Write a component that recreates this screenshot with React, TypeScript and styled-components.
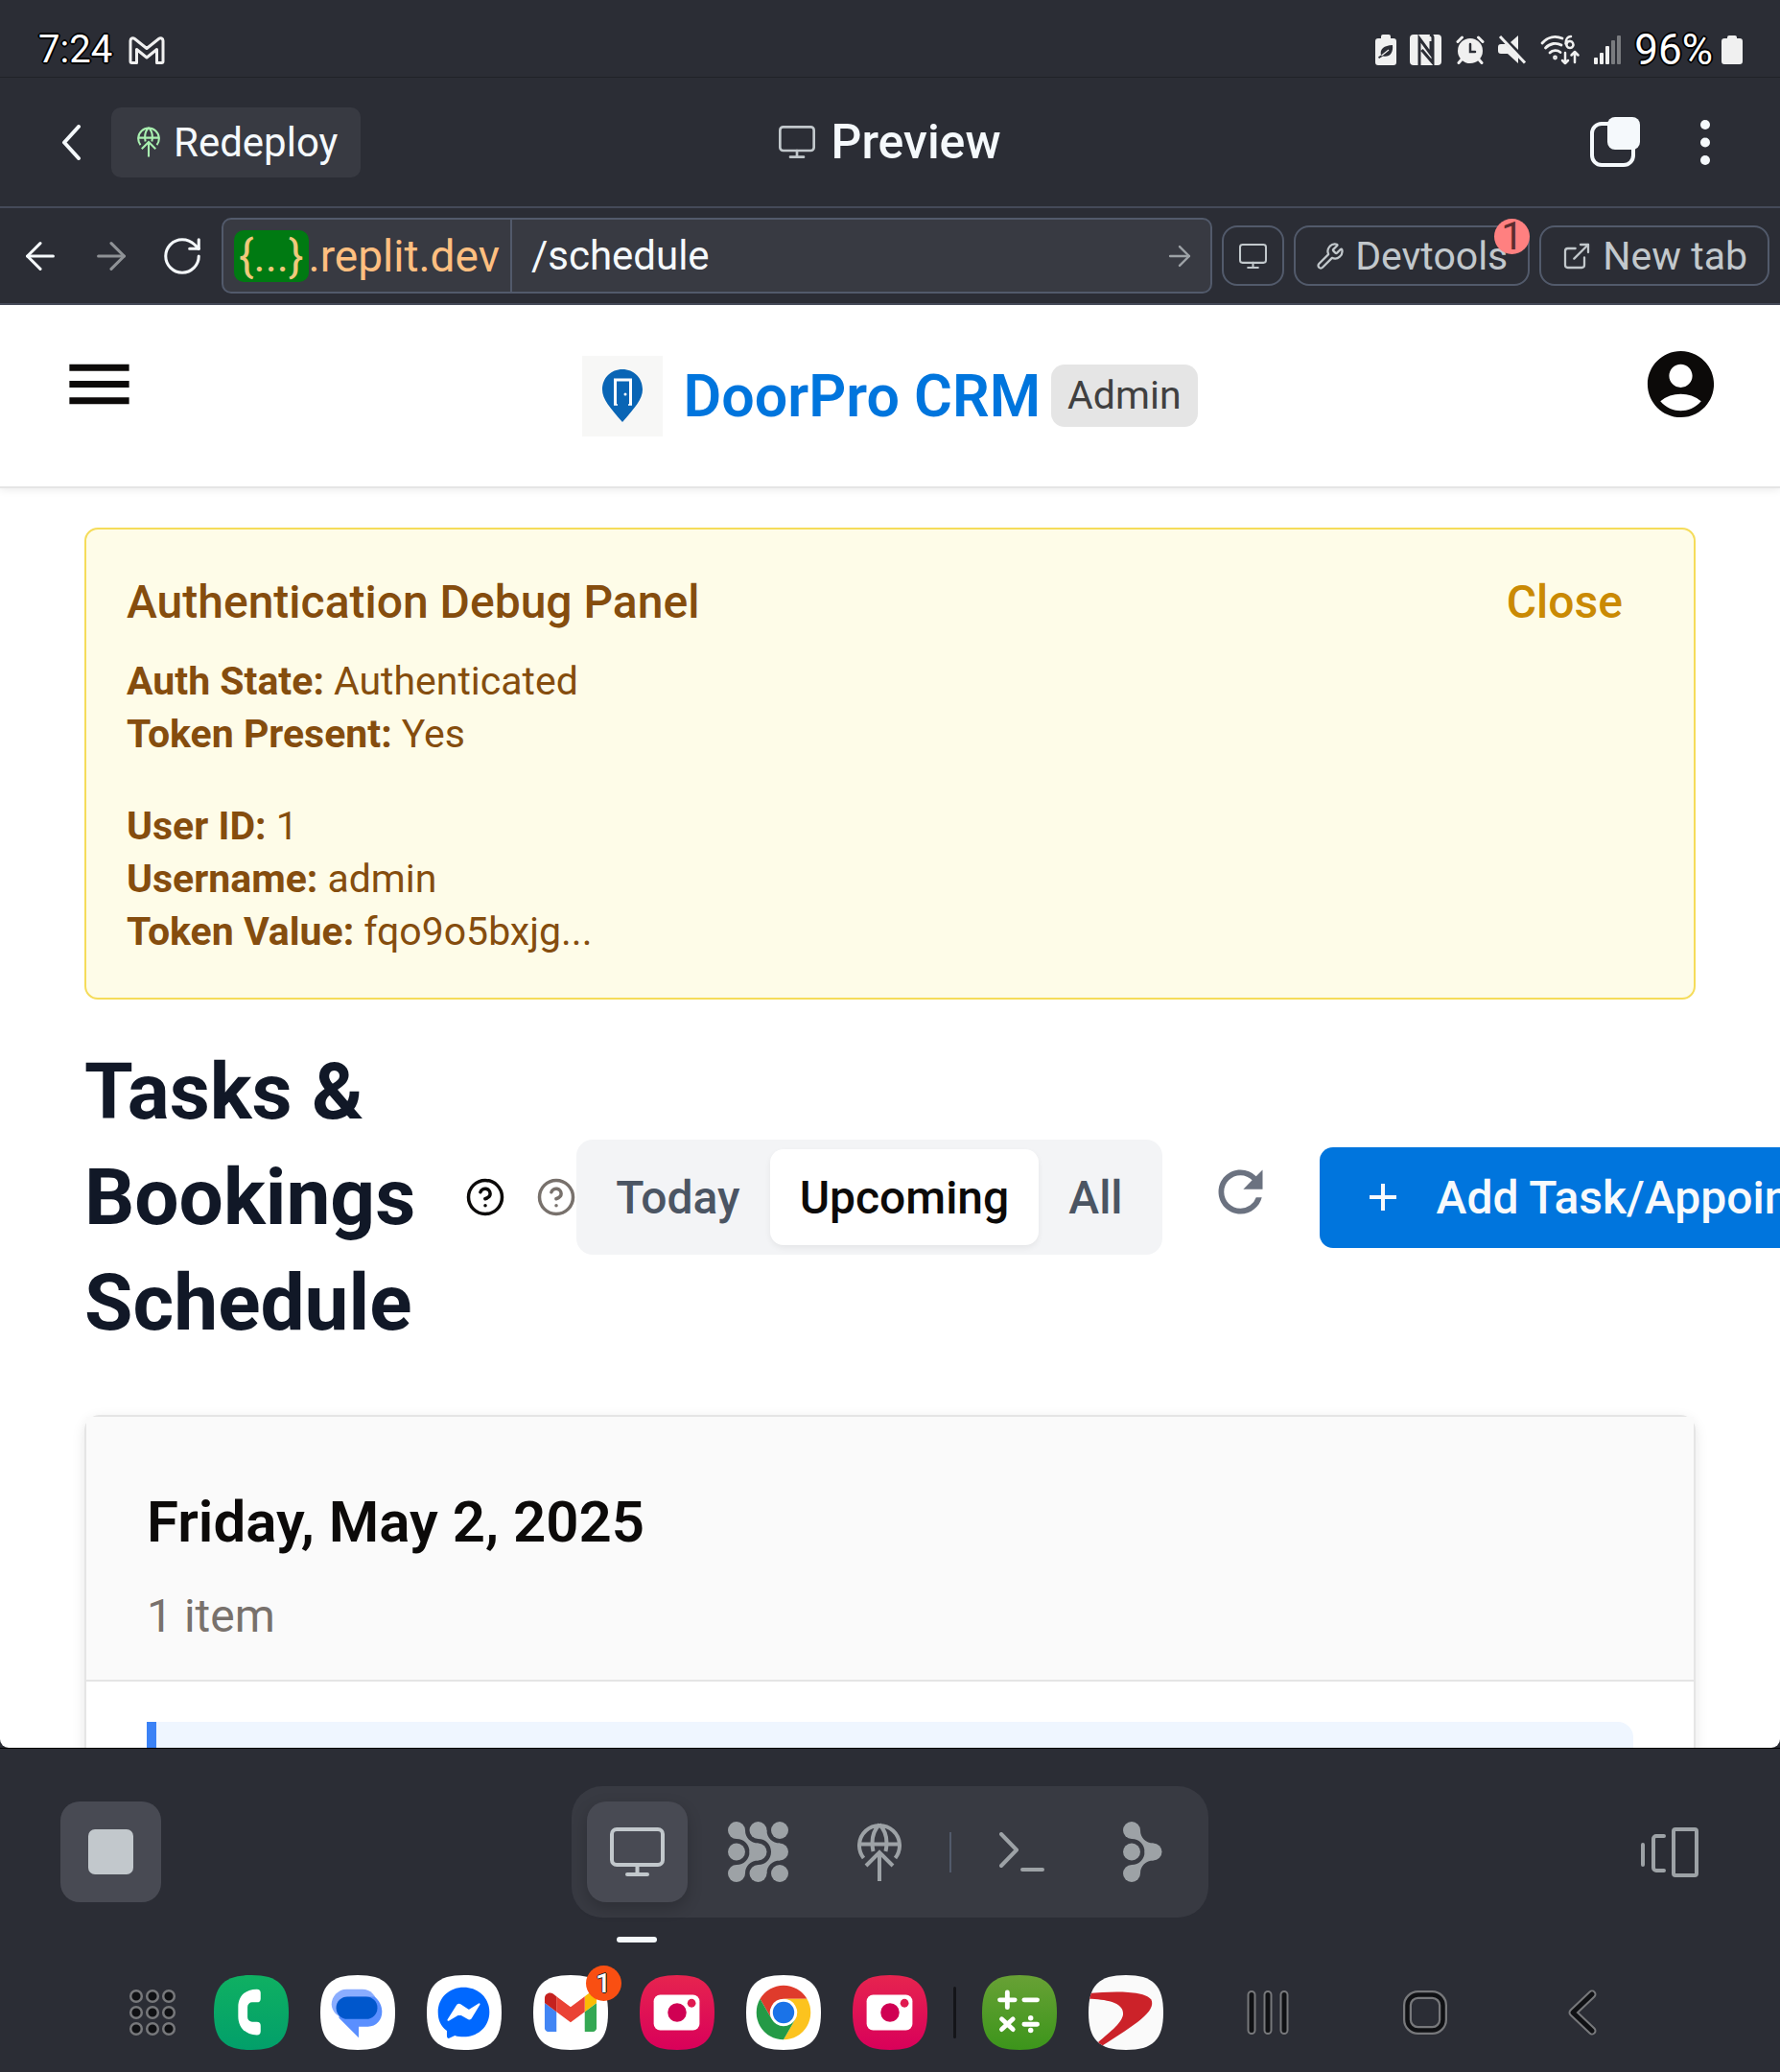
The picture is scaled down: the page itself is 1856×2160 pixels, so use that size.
import React from "react";
import styled, { createGlobalStyle, css } from "styled-components";
import { ArrowLeft, ArrowRight, CircleHelp, ExternalLink, RotateCw, Wrench } from "lucide-react";
import { MdAccountCircle, MdAdd, MdMenu, MdRefresh } from "react-icons/md";

const color = {
  shell: "#2b2d35",
  raised: "#383a42",
  raisedHigh: "#484a53",
  outline: "#525a6b",
  line: "#454a59",
  text: "#f5f9fc",
  textDim: "#c2c8cc",
  textDimmest: "#9da2a6",
  blue: "#0075dd",
};

const GlobalStyle = createGlobalStyle`
  *, *::before, *::after { box-sizing: border-box; }
  body { margin: 0; background: ${color.shell}; font-family: Roboto, "Liberation Sans", sans-serif; }
  h1, h2, p, dl, dd { margin: 0; }
  button, input { font: inherit; color: inherit; }
  svg { display: block; flex: none; }
`;

const Screen = styled.div`
  display: flex;
  flex-direction: column;
  height: 100vh;
  overflow: hidden;
  background: ${color.shell};
  color: ${color.text};
`;

const plainButton = css`
  display: flex;
  align-items: center;
  justify-content: center;
  padding: 0;
  border: 0;
  background: none;
  cursor: pointer;
`;

/* ---------- status bar ---------- */

const StatusBar = styled.div`
  display: flex;
  align-items: center;
  justify-content: space-between;
  flex: none;
  height: 81px;
  padding: 24px 39px 0 40px;
  border-bottom: 1px solid #202228;
  color: #f0f0f0;
`;

const StatusGroup = styled.div<{ $gap: number }>`
  display: flex;
  align-items: center;
  gap: ${(p) => p.$gap}px;
`;

const StatusText = styled.span<{ $large?: boolean }>`
  font-size: ${(p) => (p.$large ? 44 : 40)}px;
  line-height: 48px;
  color: #fff;
  text-shadow: 2px 0 #000, -2px 0 #000, 0 2px #000, 0 -2px #000, 1px 1px #000, -1px -1px #000, 1px -1px #000, -1px 1px #000;
`;

/* ---------- workspace header ---------- */

const WorkspaceHeader = styled.header`
  display: grid;
  grid-template-columns: 1fr auto 1fr;
  align-items: center;
  flex: none;
  height: 136px;
  padding: 0 42px;
  border-bottom: 2px solid ${color.line};
`;

const HeaderSide = styled.div<{ $end?: boolean }>`
  display: flex;
  align-items: center;
  gap: ${(p) => (p.$end ? 30 : 10)}px;
  padding-right: ${(p) => (p.$end ? 4 : 0)}px;
  justify-content: ${(p) => (p.$end ? "flex-end" : "flex-start")};
`;

const SquareButton = styled.button`
  ${plainButton}
  width: 64px;
  height: 64px;
`;

const RedeployButton = styled.button`
  ${plainButton}
  gap: 14px;
  height: 73px;
  padding: 0 24px 0 27px;
  border-radius: 10px;
  background: ${color.raised};
  font-size: 42px;
`;

const PreviewTitle = styled.h1`
  display: flex;
  align-items: center;
  gap: 16px;
  font-size: 50px;
  font-weight: 500;
  line-height: 60px;

  svg { color: ${color.textDim}; }
`;

/* ---------- address toolbar ---------- */

const Toolbar = styled.div`
  display: flex;
  align-items: center;
  flex: none;
  gap: 10px;
  height: 101px;
  padding: 0 11px 0 5px;
  border-bottom: 2px solid ${color.line};
`;

const NavGroup = styled.div`
  display: flex;
  margin-right: -6px;
`;

const NavButton = styled.button<{ $dim?: boolean }>`
  ${plainButton}
  width: 74px;
  height: 64px;
  color: ${(p) => (p.$dim ? "#8f9296" : color.text)};
`;

const AddressBox = styled.form`
  display: flex;
  flex: 1;
  align-items: stretch;
  min-width: 0;
  height: 79px;
  border: 2px solid ${color.outline};
  border-radius: 10px;
  background: ${color.raised};
`;

const Domain = styled.span`
  display: flex;
  align-items: center;
  padding: 0 11px;
  border-right: 2px solid ${color.outline};
  font-size: 46px;
  color: #ffbf80;
`;

const DomainTag = styled.span`
  padding: 0 5px;
  border-radius: 10px;
  background: #007a12;
  line-height: 54px;
  color: #f0c97c;
`;

const PathInput = styled.input`
  flex: 1;
  min-width: 0;
  padding: 0 20px;
  border: 0;
  outline: 0;
  background: none;
  font-size: 42px;
  color: ${color.text};
`;

const GoButton = styled.button`
  ${plainButton}
  width: 64px;
  color: ${color.textDimmest};
`;

const ToolButton = styled.button`
  ${plainButton}
  position: relative;
  gap: 11px;
  height: 63px;
  padding: 0 21px;
  border: 2px solid ${color.outline};
  border-radius: 16px;
  font-size: 41px;
  color: ${color.textDim};
`;

const MonitorButton = styled(ToolButton)`
  padding: 0 16px;
`;

const AlertCount = styled.span`
  position: absolute;
  top: -9px;
  right: -2px;
  width: 37px;
  height: 37px;
  border-radius: 50%;
  background: #ff8080;
  line-height: 37px;
  text-align: center;
  color: #5c2d2f;
`;

/* ---------- previewed web page ---------- */

const PageFrame = styled.div`
  flex: 1;
  min-height: 0;
  border-bottom: 1px solid #000;
`;

const Page = styled.div`
  height: 100%;
  overflow: hidden;
  border-radius: 0 0 9px 9px;
  background: #fff;
  color: #0c0a09;
`;

const AppBar = styled.header`
  display: grid;
  grid-template-columns: 1fr auto 1fr;
  align-items: start;
  padding: 41px 62px;
  border-bottom: 2px solid #e5e5e5;
  box-shadow: 0 2px 8px rgba(0, 0, 0, 0.08);
`;

const AppBarButton = styled.button<{ $end?: boolean }>`
  ${plainButton}
  justify-self: ${(p) => (p.$end ? "end" : "start")};
`;

const Brand = styled.div`
  display: flex;
  align-items: center;
  min-height: 107px;
`;

const BrandName = styled.a`
  display: flex;
  align-items: center;
  gap: 21px;
  font-size: 61px;
  font-weight: 600;
  line-height: 84px;
  color: ${color.blue};
  text-decoration: none;
`;

const RoleBadge = styled.span`
  margin-left: 11px;
  padding: 0 17px;
  border-radius: 14px;
  background: #e5e5e5;
  font-size: 41px;
  line-height: 65px;
  color: #404040;
`;

const Content = styled.main`
  padding: 41px 88px;
`;

const DebugPanel = styled.section`
  padding: 43px 42px 41px;
  border: 2px solid #f5dc5a;
  border-radius: 14px;
  background: #fefce8;
  color: #854d0e;
`;

const DebugHead = styled.div`
  display: flex;
  justify-content: space-between;
  margin-bottom: 22px;
  padding-right: 32px;
  font-size: 48px;
  line-height: 66px;
`;

const DebugTitle = styled.h2`
  font-size: 48px;
  font-weight: 500;
`;

const CloseButton = styled.button`
  ${plainButton}
  font-weight: 500;
  color: #ca8a04;
`;

const Facts = styled.dl`
  font-size: 41px;
  line-height: 55px;

  & + & { margin-top: 41px; }
`;

const Fact = styled.div`
  display: flex;
  gap: 10px;

  dt { font-weight: 700; }
`;

const TitleRow = styled.div`
  display: flex;
  align-items: center;
  margin-top: 41px;
`;

const Heading = styled.h1`
  width: min-content;
  margin-right: 52px;
  font-size: 82px;
  font-weight: 700;
  line-height: 110px;
  color: #111827;
`;

const HelpButton = styled.button<{ $muted?: boolean }>`
  ${plainButton}
  margin-left: ${(p) => (p.$muted ? 32 : 0)}px;
  color: ${(p) => (p.$muted ? "#78716c" : "#0c0a09")};
`;

const Tabs = styled.div`
  display: flex;
  flex: none;
  padding: 10px;
  border-radius: 17px;
  background: #f3f4f6;
`;

const Tab = styled.button<{ $active?: boolean }>`
  ${plainButton}
  height: 100px;
  padding: 0 31px;
  border-radius: 14px;
  font-size: 48px;
  font-weight: 500;
  color: ${(p) => (p.$active ? "#0c0a09" : "#4b5563")};
  ${(p) =>
    p.$active &&
    css`
      background: #fff;
      box-shadow: 0 3px 6px rgba(0, 0, 0, 0.06);
    `}
`;

const RefreshButton = styled.button`
  ${plainButton}
  flex: none;
  width: 80px;
  margin: 0 42px;
  padding-bottom: 12px;
  color: #6b7280;
`;

const AddButton = styled.button`
  ${plainButton}
  flex: none;
  gap: 32px;
  height: 105px;
  padding: 0 42px;
  border-radius: 14px;
  background: ${color.blue};
  font-size: 48px;
  font-weight: 500;
  white-space: nowrap;
  color: #f8fafc;
`;

const DayCard = styled.section`
  margin-top: 62px;
  border: 2px solid #e5e5e5;
  border-radius: 16px;
  box-shadow: 0 4px 14px rgba(0, 0, 0, 0.1);
`;

const DayHead = styled.div`
  padding: 64px 63px 35px;
  border-bottom: 2px solid #e5e5e5;
  background: #fafafa;
`;

const DayTitle = styled.h2`
  font-size: 60px;
  font-weight: 600;
  line-height: 92px;
`;

const DayCount = styled.p`
  margin-top: 21px;
  font-size: 48px;
  line-height: 62px;
  color: #78716c;
`;

const DayBody = styled.div`
  padding: 42px 63px;
`;

const Booking = styled.article`
  min-height: 240px;
  border-left: 10px solid #3b82f6;
  border-radius: 0 16px 16px 0;
  background: #eff6ff;
`;

/* ---------- workspace dock ---------- */

const DockRow = styled.nav`
  display: grid;
  grid-template-columns: 1fr auto 1fr;
  align-items: center;
  flex: none;
  padding: 39px 63px 38px;
`;

const StopButton = styled.button`
  ${plainButton}
  width: 105px;
  height: 105px;
  border-radius: 20px;
  background: ${color.raisedHigh};

  &::before {
    content: "";
    width: 47px;
    height: 47px;
    border-radius: 7px;
    background: ${color.textDim};
  }
`;

const Dock = styled.div`
  display: flex;
  align-items: center;
  gap: 21px;
  padding: 16px;
  border-radius: 32px;
  background: ${color.raised};
`;

const DockButton = styled.button<{ $active?: boolean }>`
  ${plainButton}
  position: relative;
  width: 105px;
  height: 105px;
  border-radius: 20px;
  color: ${(p) => (p.$active ? color.textDim : color.textDimmest)};
  ${(p) =>
    p.$active &&
    css`
      background: ${color.raisedHigh};
      box-shadow: 0 6px 16px rgba(0, 0, 0, 0.2);

      &::after {
        content: "";
        position: absolute;
        left: 31px;
        top: 141px;
        width: 42px;
        height: 6px;
        border-radius: 3px;
        background: ${color.text};
      }
    `}
`;

const DockDivider = styled.span`
  width: 2px;
  height: 42px;
  background: ${color.outline};
`;

const SwitcherButton = styled(SquareButton)`
  justify-self: end;
  margin-right: 20px;
  color: ${color.textDimmest};
`;

/* ---------- system task bar ---------- */

const TaskBar = styled.nav`
  display: flex;
  align-items: center;
  justify-content: center;
  flex: none;
  height: 123px;
  padding-bottom: 2px;
`;

const AppGroup = styled.div`
  display: flex;
  gap: 33px;
`;

const AppButton = styled.button`
  ${plainButton}
  position: relative;
`;

const DrawerButton = styled.button`
  ${plainButton}
  margin-right: 39px;
`;

const AppBadge = styled.span`
  position: absolute;
  top: -10px;
  right: -14px;
  width: 37px;
  height: 37px;
  border-radius: 50%;
  background: #f94f12;
  font-size: 28px;
  font-weight: 500;
  line-height: 37px;
  text-align: center;
  color: #fff;
  text-shadow: 1px 0 #222, -1px 0 #222, 0 1px #222, 0 -1px #222;
`;

const TaskDivider = styled.span`
  width: 3px;
  height: 54px;
  margin: 0 27px;
  border-radius: 2px;
  background: #141519;
`;

const SystemNav = styled.div`
  display: flex;
  gap: 18px;
  margin-left: 36px;
`;

const SystemButton = styled.button`
  ${plainButton}
  width: 146px;
  height: 80px;
`;

/* ---------- drawings ---------- */

const MonitorIcon = ({ width }: { width: number }) => (
  <svg width={width} height={Math.round((width * 51) / 57)} viewBox="0 0 57 51" fill="none" stroke="currentColor" strokeWidth="4" strokeLinecap="round">
    <rect x="2" y="2" width="53" height="37" rx="5" />
    <path d="M28.5 39v10M18 49h21" />
  </svg>
);

const DeployIcon = ({ width, tint }: { width: number; tint?: string }) => (
  <svg width={width} height={Math.round((width * 62) / 46)} viewBox="0 0 46 62" fill="none" stroke={tint ?? "currentColor"} strokeWidth="4">
    <path d="M6.500 37A21 21 0 1 1 39.500 37M2 22.500H44M23 2C17 8 14 18 16.500 30M23 2C29 8 32 18 29.500 30" />
    <path d="M23 61V31M9 45L23 31L37 45" />
  </svg>
);

const link = "M9 9H18C18 17 24 22.500 31.500 22.500V31.500H22.500C22.500 24 17 18 9 18ZM9 54H18C18 46 24 40.500 31.500 40.500V31.500H22.500C22.500 39 17 45 9 45Z";

const AgentIcon = () => (
  <svg width="63" height="63" viewBox="0 0 63 63" fill="currentColor">
    {[9, 31.5, 54].map((x) => [9, 31.5, 54].map((y) => <circle key={`${x}-${y}`} cx={x} cy={y} r="9" />))}
    <path d={link} />
    <path d={link} transform="translate(22.500 0)" />
  </svg>
);

const BranchIcon = () => (
  <svg width="41" height="63" viewBox="0 0 41 63" fill="currentColor">
    <circle cx="9" cy="9" r="9" />
    <circle cx="9" cy="31.500" r="9" />
    <circle cx="9" cy="54" r="9" />
    <circle cx="31.500" cy="31.500" r="9" />
    <path d={link} />
  </svg>
);

const TerminalIcon = () => (
  <svg width="47" height="42" viewBox="0 0 47 42" fill="none" stroke="currentColor" strokeWidth="4" strokeLinecap="round" strokeLinejoin="round">
    <path d="M2 2L18 18.500L2 35M24 39H45" />
  </svg>
);

const SwitcherIcon = () => (
  <svg width="60" height="52" viewBox="0 0 60 52" fill="none" stroke="currentColor" strokeWidth="4" strokeLinecap="round">
    <rect x="34" y="2" width="24" height="48" rx="2" />
    <path d="M24 9H16a3 3 0 0 0-3 3V42a3 3 0 0 0 3 3H24M2 18V39" />
  </svg>
);

const ChevronIcon = () => (
  <svg width="21" height="37" viewBox="0 0 21 37" fill="none" stroke="currentColor" strokeWidth="4" strokeLinecap="round" strokeLinejoin="round">
    <path d="M18 2L3 18.500L18 35" />
  </svg>
);

const WindowsIcon = () => (
  <svg width="52" height="52" viewBox="0 0 52 52">
    <rect x="2" y="7" width="43" height="43" rx="10" fill="none" stroke="currentColor" strokeWidth="4" />
    <rect x="18" y="0" width="34" height="34" rx="8" fill="currentColor" />
  </svg>
);

const MoreIcon = () => (
  <svg width="12" height="47" viewBox="0 0 12 47" fill="currentColor">
    <circle cx="6" cy="5" r="5" />
    <circle cx="6" cy="23.500" r="5" />
    <circle cx="6" cy="42" r="5" />
  </svg>
);

const MailStatusIcon = () => (
  <svg width="38" height="29" viewBox="0 0 38 29" fill="none" stroke="currentColor" strokeWidth="3" strokeLinejoin="round">
    <path d="M2 4.500C2 2 4.500 1 6.500 2.500L19 12.500L31.500 2.500C33.500 1 36 2 36 4.500V26Q36 27.500 34.500 27.500H29.500V13.500L19 22L8.500 13.500V27.500H3.500Q2 27.500 2 26Z" />
  </svg>
);

const PowerSaveIcon = () => (
  <svg width="22" height="32" viewBox="0 0 22 32">
    <path fill="currentColor" d="M6 2Q6 0 8 0H14Q16 0 16 2V4H19Q22 4 22 7V29Q22 32 19 32H3Q0 32 0 29V7Q0 4 3 4H6Z" />
    <path fill="#2b2d35" d="M18 11C19 19 15 24 8 22.500L4 25L3 23.500L6 21.500C4.500 15 9 11.500 18 11Z" />
    <path stroke="#f0f0f0" strokeWidth="1.200" fill="none" d="M6.500 22L14 16" />
  </svg>
);

const NfcIcon = () => (
  <svg width="34" height="32" viewBox="0 0 34 32">
    <rect x="0" y="0" width="33" height="32" rx="4" fill="currentColor" />
    <path fill="none" stroke="#2b2d35" strokeWidth="3" d="M10 32V4L22 20.500V7M12.500 16L24 29.500V3Q24 1 21 0" />
  </svg>
);

const AlarmIcon = () => (
  <svg width="30" height="30" viewBox="0 0 30 30" fill="none" stroke="currentColor" strokeWidth="3" strokeLinecap="round">
    <circle cx="15" cy="16" r="13" fill="currentColor" stroke="none" />
    <path d="M2 6.500L6.500 2M28 6.500L23.500 2M6 25L3 28.500M24 25L27 28.500" />
    <path stroke="#2b2d35" strokeWidth="2.500" d="M15 9V17H20" />
  </svg>
);

const MuteIcon = () => (
  <svg width="30" height="30" viewBox="0 0 30 30">
    <path fill="currentColor" d="M21 0V15L13 7ZM3 9H8L21 22V29L10 19H3Q0 19 0 16V12Q0 9 3 9Z" />
    <path stroke="currentColor" strokeWidth="3" d="M2 1L28 28.500" />
  </svg>
);

const WifiIcon = () => (
  <svg width="42" height="32" viewBox="0 0 42 32" fill="none" stroke="currentColor" strokeWidth="2.800" strokeLinecap="round" strokeLinejoin="round">
    <path d="M2 9C8 2 16 1 23 4M5.500 14C10 9 17 8 22 11M10 19C13 16 18 16 21 18.500" />
    <circle cx="15.500" cy="24" r="1" />
    <path strokeWidth="2.500" d="M32 2C28 2 26.500 6 26.500 9.500M31 7a3.500 3.500 0 1 1-.1 0a4 4 0 0 0-4 3" />
    <path strokeWidth="2.500" d="M26 19V30M23 27L26 30L29 27M36 29V18M32.500 21.500L36 18L39.500 21.500" />
  </svg>
);

const SignalIcon = () => (
  <svg width="28" height="30" viewBox="0 0 28 30" fill="currentColor">
    <rect x="0" y="23" width="4" height="7" rx="1" />
    <rect x="6" y="18" width="4" height="12" rx="1" />
    <rect x="12" y="11" width="4" height="19" rx="1" />
    <rect x="18" y="5" width="4" height="25" rx="1" opacity="0.400" />
    <rect x="24" y="0" width="4" height="30" rx="1" opacity="0.400" />
  </svg>
);

const BatteryIcon = () => (
  <svg width="22" height="30" viewBox="0 0 22 30" fill="currentColor">
    <path d="M6 2Q6 0 8 0H14Q16 0 16 2V3H19Q22 3 22 6V27Q22 30 19 30H3Q0 30 0 27V6Q0 3 3 3H6Z" />
  </svg>
);

const DoorLogo = () => (
  <svg width="84" height="84" viewBox="0 0 84 84">
    <rect width="84" height="84" fill="#f7f7f6" />
    <path fill="#0965b5" d="M42 14C54 14 63 23 63 35C63 45 55 54 42 69C29 54 21 45 21 35C21 23 30 14 42 14Z" />
    <path fill="none" stroke="#fff" strokeWidth="3" d="M34.500 51V25H50.500V51" />
    <path fill="none" stroke="#fff" strokeWidth="1.500" d="M33 51H37M48 51H52" />
    <circle cx="45" cy="40" r="1.500" fill="#fff" />
  </svg>
);

const squircle = "M40 0C69 0 80 11 80 40C80 69 69 80 40 80C11 80 0 69 0 40C0 11 11 0 40 0Z";

const AppIcon = ({ id, from, to, children }: { id: string; from: string; to: string; children: React.ReactNode }) => (
  <svg width="78" height="78" viewBox="0 0 80 80">
    <defs>
      <linearGradient id={`${id}-fill`} x1="0" y1="0" x2="0" y2="1">
        <stop offset="0" stopColor={from} />
        <stop offset="1" stopColor={to} />
      </linearGradient>
      <clipPath id={`${id}-clip`}>
        <path d={squircle} />
      </clipPath>
    </defs>
    <path d={squircle} fill={`url(#${id}-fill)`} />
    <g clipPath={`url(#${id}-clip)`}>{children}</g>
  </svg>
);

const PhoneApp = () => (
  <AppIcon id="phone" from="#0fb062" to="#029f6a">
    <path fill="#fff" d="M46 15C33 15 26 23 26 34V44C26 55 33 64 46 64A4 4 0 0 0 50 60V54A4 4 0 0 0 46 50H41A5 5 0 0 1 36 45V34A5 5 0 0 1 41 29H46A4 4 0 0 0 50 25V19A4 4 0 0 0 46 15Z" />
  </AppIcon>
);

const MessagesApp = () => (
  <AppIcon id="messages" from="#fff" to="#fff">
    <path fill="#8aadff" d="M28 15H45C54 15 60 22 60 30V46H28C19 46 12 39 12 31S19 15 28 15Z" />
    <path fill="#5a8fff" d="M32 23H58C63 27 66 33 66 39C66 48 60 55 51 55H41V67L20 46V30Z" />
    <rect x="17" y="23" width="44" height="24" rx="12" fill="#0057cc" />
  </AppIcon>
);

const MessengerApp = () => (
  <AppIcon id="messenger" from="#fff" to="#fff">
    <path fill="#0068ff" d="M39.500 13C55 13 67 24 67 39.500S55 66 39.500 66C36 66 33 65.500 30 64.500L24 67.500Q21.500 68 21.500 65.500V59.500C15 55 12 48 12 39.500C12 24 24 13 39.500 13Z" />
    <path fill="#fff" stroke="#fff" strokeWidth="2" strokeLinejoin="round" d="M23 48L33 32Q34.500 31 36 32L45 38L56 31L47 46Q45.500 47.500 44 46L35 41Z" />
  </AppIcon>
);

const GmailApp = () => (
  <AppIcon id="gmail" from="#fff" to="#fff">
    <g transform="translate(-20.500 -7.500) scale(0.630)">
      <path fill="#4285f4" d="M58 108h14V74L52 59v43c0 3.320 2.690 6 6 6" />
      <path fill="#34a853" d="M120 108h14c3.320 0 6-2.690 6-6V59l-20 15" />
      <path fill="#fbbc04" d="M120 48v26l20-15v-8c0-7.420-8.470-11.650-14.400-7.200" />
      <path fill="#ea4335" d="M72 74V48l24 18 24-18v26L96 92" />
      <path fill="#c5221f" d="M52 51v8l20 15V48l-5.600-4.200c-5.940-4.450-14.400-.22-14.400 7.200" />
    </g>
  </AppIcon>
);

const CameraApp = ({ id }: { id: string }) => (
  <AppIcon id={id} from="#e6244f" to="#d9005a">
    <rect x="15" y="21" width="49" height="38" rx="7" fill="#fff" />
    <circle cx="40" cy="40" r="10" fill="#d00053" />
    <circle cx="55.500" cy="30" r="4.500" fill="#e01a50" />
  </AppIcon>
);

const ChromeApp = () => (
  <AppIcon id="chrome" from="#fff" to="#fff">
    <g transform="translate(11 11) scale(1.208)">
      <circle cx="24" cy="24" r="12" fill="#fff" />
      <path fill="#df3b2c" d="M24 12H44.780a23.990 23.990 0 0 0-41.560 0L13.610 30A11.990 11.990 0 0 1 24 12Z" />
      <path fill="#fcc31e" d="M34.390 30L24 48A23.990 23.990 0 0 0 44.780 12H24A11.990 11.990 0 0 1 34.390 30Z" />
      <path fill="#249a46" d="M13.610 30L3.220 12A23.990 23.990 0 0 0 24 48L34.390 30A11.990 11.990 0 0 1 13.610 30Z" />
      <circle cx="24" cy="24" r="9.500" fill="#1a73e8" />
    </g>
  </AppIcon>
);

const CalculatorApp = () => (
  <AppIcon id="calculator" from="#68a135" to="#3c951b">
    <path fill="none" stroke="#fff" strokeWidth="5" strokeLinecap="round" d="M19 26.500H35M27 18.500V34.500M45 26.500H59M21 47L33 58M33 47L21 58M45 52.500H59" />
    <circle cx="52" cy="46" r="2.800" fill="#fff" />
    <circle cx="52" cy="59" r="2.800" fill="#fff" />
  </AppIcon>
);

const SwooshApp = () => (
  <AppIcon id="swoosh" from="#fafafa" to="#fafafa">
    <path fill="#cc2229" d="M0 19.500C24 17 60 16 67 26C73 39 50 53 14 76L10 72C24 60 37 50 37 41C37 29 18 26 0 25.500Z" />
  </AppIcon>
);

const DrawerIcon = () => (
  <svg width="50" height="50" viewBox="0 0 50 50" fill="#101114" stroke="#77787b" strokeWidth="2.500">
    {[8, 25, 42].map((x) => [8, 25, 42].map((y) => <circle key={`${x}-${y}`} cx={x} cy={y} r="5.800" />))}
  </svg>
);

const SystemGlyph = ({ d }: { d: string }) => (
  <svg width="48" height="48" viewBox="0 0 48 48" fill="none" strokeLinecap="round" strokeLinejoin="round">
    <path d={d} stroke="#77787b" strokeWidth="9" />
    <path d={d} stroke="#101114" strokeWidth="5" />
  </svg>
);

const HomeGlyph = () => (
  <svg width="48" height="48" viewBox="0 0 48 48" fill="none">
    <rect x="5.500" y="5.500" width="37" height="37" rx="11" stroke="#77787b" strokeWidth="9" />
    <rect x="5.500" y="5.500" width="37" height="37" rx="11" stroke="#101114" strokeWidth="4.500" />
  </svg>
);

/* ---------- content ---------- */

const session: [string, string][][] = [
  [
    ["Auth State:", "Authenticated"],
    ["Token Present:", "Yes"],
  ],
  [
    ["User ID:", "1"],
    ["Username:", "admin"],
    ["Token Value:", "fqo9o5bxjg..."],
  ],
];

const ranges = ["Today", "Upcoming", "All"];

export default function App() {
  const [range, setRange] = React.useState("Upcoming");
  const [path, setPath] = React.useState("/schedule");

  return (
    <Screen>
      <GlobalStyle />

      <StatusBar>
        <StatusGroup $gap={17}>
          <StatusText>7:24</StatusText>
          <MailStatusIcon />
        </StatusGroup>
        <StatusGroup $gap={14}>
          <PowerSaveIcon />
          <NfcIcon />
          <AlarmIcon />
          <MuteIcon />
          <WifiIcon />
          <SignalIcon />
          <StatusGroup $gap={9}>
            <StatusText $large>96%</StatusText>
            <BatteryIcon />
          </StatusGroup>
        </StatusGroup>
      </StatusBar>

      <WorkspaceHeader>
        <HeaderSide>
          <SquareButton aria-label="Back to workspace">
            <ChevronIcon />
          </SquareButton>
          <RedeployButton>
            <DeployIcon width={24} tint="#a9f0b0" />
            Redeploy
          </RedeployButton>
        </HeaderSide>
        <PreviewTitle>
          <MonitorIcon width={38} />
          Preview
        </PreviewTitle>
        <HeaderSide $end>
          <SquareButton aria-label="Windows">
            <WindowsIcon />
          </SquareButton>
          <SquareButton aria-label="More">
            <MoreIcon />
          </SquareButton>
        </HeaderSide>
      </WorkspaceHeader>

      <Toolbar>
        <NavGroup>
          <NavButton aria-label="Go back">
            <ArrowLeft size={46} strokeWidth={1.6} />
          </NavButton>
          <NavButton aria-label="Go forward" $dim>
            <ArrowRight size={46} strokeWidth={1.6} />
          </NavButton>
          <NavButton aria-label="Reload">
            <RotateCw size={46} strokeWidth={1.6} />
          </NavButton>
        </NavGroup>
        <AddressBox onSubmit={(e) => e.preventDefault()}>
          <Domain>
            <DomainTag>{"{...}"}</DomainTag>
            .replit.dev
          </Domain>
          <PathInput aria-label="Page path" value={path} onChange={(e) => setPath(e.target.value)} />
          <GoButton aria-label="Go" type="submit">
            <ArrowRight size={34} strokeWidth={1.7} />
          </GoButton>
        </AddressBox>
        <MonitorButton aria-label="Device size">
          <MonitorIcon width={29} />
        </MonitorButton>
        <ToolButton>
          <Wrench size={30} strokeWidth={1.8} />
          Devtools
          <AlertCount>1</AlertCount>
        </ToolButton>
        <ToolButton>
          <ExternalLink size={32} strokeWidth={1.7} />
          New tab
        </ToolButton>
      </Toolbar>

      <PageFrame>
        <Page>
          <AppBar>
            <AppBarButton aria-label="Menu">
              <MdMenu size={83} />
            </AppBarButton>
            <Brand>
              <BrandName href="#">
                <DoorLogo />
                DoorPro CRM
              </BrandName>
              <RoleBadge>Admin</RoleBadge>
            </Brand>
            <AppBarButton aria-label="Account" $end>
              <MdAccountCircle size={83} />
            </AppBarButton>
          </AppBar>

          <Content>
            <DebugPanel>
              <DebugHead>
                <DebugTitle>Authentication Debug Panel</DebugTitle>
                <CloseButton>Close</CloseButton>
              </DebugHead>
              {session.map((facts, i) => (
                <Facts key={i}>
                  {facts.map(([name, value]) => (
                    <Fact key={name}>
                      <dt>{name}</dt>
                      <dd>{value}</dd>
                    </Fact>
                  ))}
                </Facts>
              ))}
            </DebugPanel>

            <TitleRow>
              <Heading>Tasks &amp; Bookings Schedule</Heading>
              <HelpButton aria-label="Help">
                <CircleHelp size={42} />
              </HelpButton>
              <HelpButton aria-label="More help" $muted>
                <CircleHelp size={42} />
              </HelpButton>
              <Tabs>
                {ranges.map((name) => (
                  <Tab key={name} $active={name === range} onClick={() => setRange(name)}>
                    {name}
                  </Tab>
                ))}
              </Tabs>
              <RefreshButton aria-label="Refresh">
                <MdRefresh size={69} />
              </RefreshButton>
              <AddButton>
                <MdAdd size={48} />
                Add Task/Appointment
              </AddButton>
            </TitleRow>

            <DayCard>
              <DayHead>
                <DayTitle>Friday, May 2, 2025</DayTitle>
                <DayCount>1 item</DayCount>
              </DayHead>
              <DayBody>
                <Booking />
              </DayBody>
            </DayCard>
          </Content>
        </Page>
      </PageFrame>

      <DockRow>
        <StopButton aria-label="Stop" />
        <Dock>
          <DockButton aria-label="Preview" $active>
            <MonitorIcon width={57} />
          </DockButton>
          <DockButton aria-label="Agent">
            <AgentIcon />
          </DockButton>
          <DockButton aria-label="Deployments">
            <DeployIcon width={46} />
          </DockButton>
          <DockDivider />
          <DockButton aria-label="Shell">
            <TerminalIcon />
          </DockButton>
          <DockButton aria-label="Branches">
            <BranchIcon />
          </DockButton>
        </Dock>
        <SwitcherButton aria-label="Open tabs">
          <SwitcherIcon />
        </SwitcherButton>
      </DockRow>

      <TaskBar>
        <DrawerButton aria-label="All apps">
          <DrawerIcon />
        </DrawerButton>
        <AppGroup>
          <AppButton aria-label="Phone"><PhoneApp /></AppButton>
          <AppButton aria-label="Messages"><MessagesApp /></AppButton>
          <AppButton aria-label="Messenger"><MessengerApp /></AppButton>
          <AppButton aria-label="Gmail">
            <GmailApp />
            <AppBadge>1</AppBadge>
          </AppButton>
          <AppButton aria-label="Camera"><CameraApp id="camera" /></AppButton>
          <AppButton aria-label="Chrome"><ChromeApp /></AppButton>
          <AppButton aria-label="Recent camera"><CameraApp id="camera-recent" /></AppButton>
        </AppGroup>
        <TaskDivider />
        <AppGroup>
          <AppButton aria-label="Calculator"><CalculatorApp /></AppButton>
          <AppButton aria-label="Swoosh"><SwooshApp /></AppButton>
        </AppGroup>
        <SystemNav>
          <SystemButton aria-label="Recents">
            <SystemGlyph d="M7 5.500V42.500M24 5.500V42.500M41 5.500V42.500" />
          </SystemButton>
          <SystemButton aria-label="Home">
            <HomeGlyph />
          </SystemButton>
          <SystemButton aria-label="Back">
            <SystemGlyph d="M34 5L14 24L34 43" />
          </SystemButton>
        </SystemNav>
      </TaskBar>
    </Screen>
  );
}
